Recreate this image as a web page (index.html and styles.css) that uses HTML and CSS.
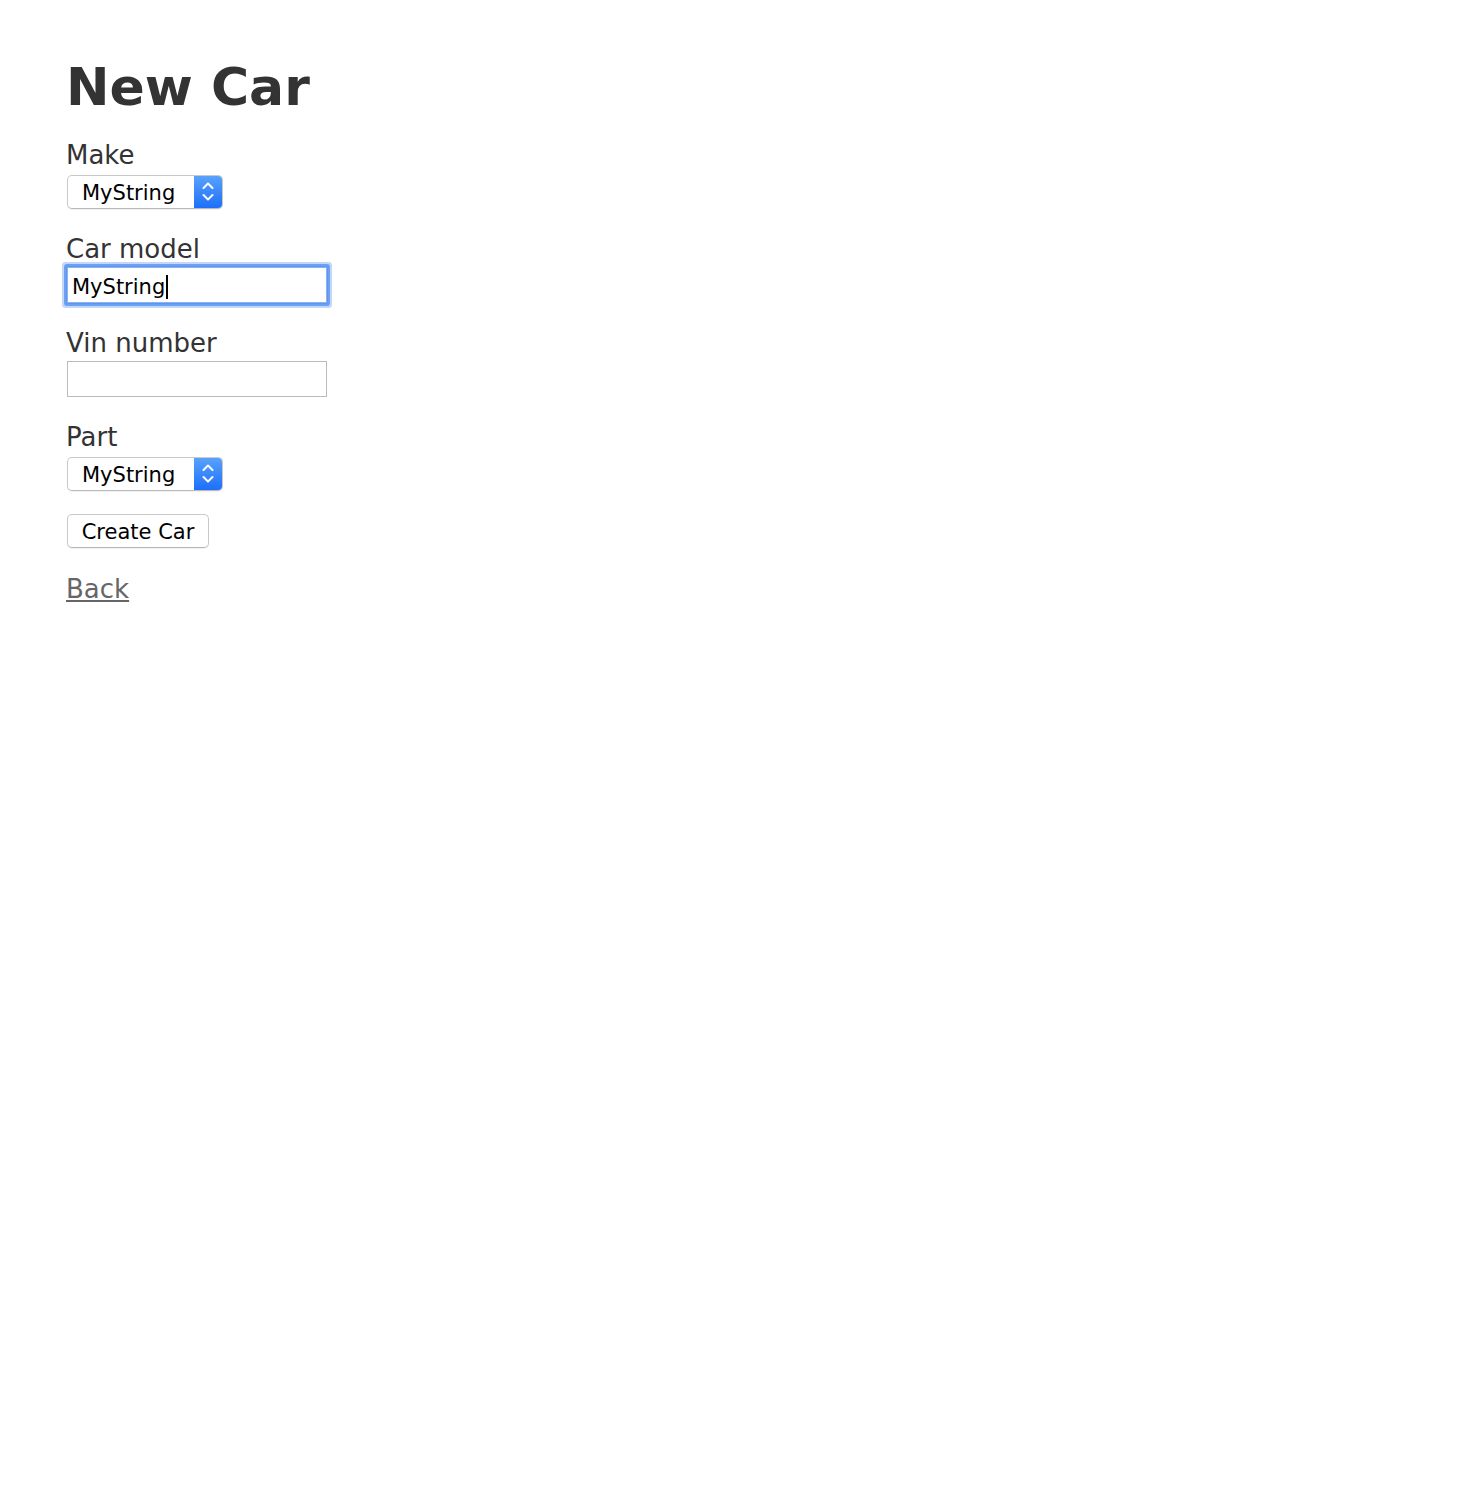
FILE: index.html
```html
<!DOCTYPE html>
<html lang="en">
<head>
<meta charset="utf-8">
<title>New Car</title>
<link rel="stylesheet" href="styles.css">
</head>
<body>
<div class="page">
  <h1 class="title">New Car</h1>
  <form class="form">
    <div class="field">
      <label class="label">Make</label>
      <div class="select">
        <span class="select-value">MyString</span>
        <span class="select-arrow">
          <svg width="29" height="34" viewBox="0 0 29 34"><path d="M9.5 13 L14 8.5 L18.5 13" fill="none" stroke="#fff" stroke-width="2" stroke-linecap="round" stroke-linejoin="round"/><path d="M9.5 20 L14 24.5 L18.5 20" fill="none" stroke="#fff" stroke-width="2" stroke-linecap="round" stroke-linejoin="round"/></svg>
        </span>
      </div>
    </div>
    <div class="field">
      <label class="label">Car model</label>
      <div class="input-wrap">
        <input class="input input-focus" type="text" value="MyString">
        <span class="caret"></span>
      </div>
    </div>
    <div class="field">
      <label class="label">Vin number</label>
      <div class="input-wrap">
        <input class="input" type="text" value="">
      </div>
    </div>
    <div class="field field-last">
      <label class="label">Part</label>
      <div class="select">
        <span class="select-value">MyString</span>
        <span class="select-arrow">
          <svg width="29" height="34" viewBox="0 0 29 34"><path d="M9.5 13 L14 8.5 L18.5 13" fill="none" stroke="#fff" stroke-width="2" stroke-linecap="round" stroke-linejoin="round"/><path d="M9.5 20 L14 24.5 L18.5 20" fill="none" stroke="#fff" stroke-width="2" stroke-linecap="round" stroke-linejoin="round"/></svg>
        </span>
      </div>
    </div>
    <div class="actions">
      <button class="button" type="button">Create Car</button>
    </div>
  </form>
  <a class="back" href="#">Back</a>
</div>
</body>
</html>
```

FILE: styles.css
```css
html, body {
  margin: 0;
  padding: 0;
  background: #fff;
}

.page {
  padding: 57px 0 0 66px;
  font-family: "DejaVu Sans", Verdana, sans-serif;
  color: #333;
}

.title {
  margin: 0 0 23px 0;
  font-size: 52px;
  line-height: 60px;
  font-weight: bold;
  color: #333;
}

.form {
  margin: 0;
}

.field {
  margin-bottom: 25px;
}

.field-last {
  margin-bottom: 23px;
}

.label {
  display: block;
  font-size: 26px;
  line-height: 30px;
  color: #333;
}

.select {
  margin: 5px 0 0 1px;
  width: 156px;
  height: 34px;
  box-sizing: border-box;
  border: 1px solid #c9c9c9;
  border-bottom-color: #b9b9b9;
  border-radius: 5px;
  display: flex;
  align-items: center;
  overflow: hidden;
  background: #fff;
  box-shadow: 0 1px 1px rgba(0, 0, 0, 0.06);
}

.select-value {
  flex: 1;
  padding: 2px 0 0 14px;
  font-size: 21px;
  color: #000;
}

.select-arrow {
  width: 29px;
  height: 34px;
  flex: none;
  background: linear-gradient(#5aa3fd, #1b6ef9);
  display: flex;
  align-items: center;
  justify-content: center;
  margin-right: -1px;
}

.input-wrap {
  position: relative;
  margin: 3px 0 0 1px;
  width: 260px;
  height: 36px;
}

.input {
  display: block;
  width: 260px;
  height: 36px;
  box-sizing: border-box;
  margin: 0;
  padding: 3px 4px 0 4px;
  border: 1px solid #bcbcbc;
  font-family: "DejaVu Sans", Verdana, sans-serif;
  font-size: 21px;
  color: #000;
  background: #fff;
  outline: none;
}

.input-focus {
  border-color: #8fb2ee;
  box-shadow: 0 0 0 1px #5d96f0, 0 0 0 3px #6ca0f2, 0 0 0 5px rgba(120, 166, 244, 0.45);
  border-radius: 1px;
}

.caret {
  position: absolute;
  left: 99px;
  top: 8px;
  width: 2px;
  height: 24px;
  background: #000;
}

.actions {
  margin: 0 0 26px 1px;
}

.button {
  display: block;
  margin: 0;
  width: 142px;
  height: 34px;
  box-sizing: border-box;
  padding: 2px 0 0 0;
  border: 1px solid #c9c9c9;
  border-bottom-color: #b5b5b5;
  border-radius: 5px;
  background: #fff;
  font-family: "DejaVu Sans", Verdana, sans-serif;
  font-size: 21px;
  color: #000;
  box-shadow: 0 1px 1px rgba(0, 0, 0, 0.06);
}

.back {
  display: inline-block;
  font-size: 26px;
  line-height: 30px;
  color: #666;
  text-decoration: underline;
}
```
